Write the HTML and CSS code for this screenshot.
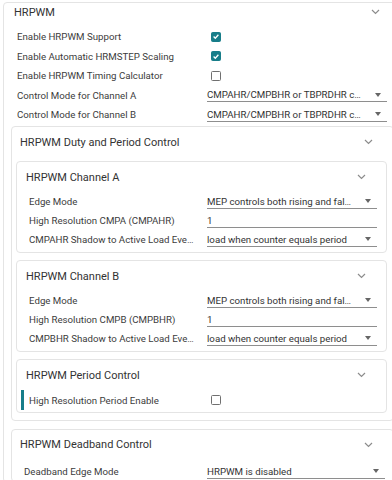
FILE: index.html
```html
<!DOCTYPE html>
<html lang="en">
<head>
    <meta charset="UTF-8">
    <meta name="viewport" content="width=device-width, initial-scale=1.0">
    <title>HRPWM</title>
    <link rel="stylesheet" href="styles.css">
</head>
<body>
    <div class="panel">
        <div class="panel-head">
            <span>HRPWM</span>
            <svg class="chevron" width="9" height="6" viewBox="0 0 9 6"><path d="M1 1 L4.5 4.5 L8 1"/></svg>
        </div>
        <div class="panel-body">
            <div class="row">
                <label>Enable HRPWM Support</label>
                <span class="check on"><svg width="9" height="9" viewBox="0 0 9 9"><path d="M1.8 4.6 L3.7 6.4 L7.2 2.6"/></svg></span>
            </div>
            <div class="row">
                <label>Enable Automatic HRMSTEP Scaling</label>
                <span class="check on"><svg width="9" height="9" viewBox="0 0 9 9"><path d="M1.8 4.6 L3.7 6.4 L7.2 2.6"/></svg></span>
            </div>
            <div class="row">
                <label>Enable HRPWM Timing Calculator</label>
                <span class="check"></span>
            </div>
            <div class="row">
                <label>Control Mode for Channel A</label>
                <div class="select"><span>CMPAHR/CMPBHR or TBPRDHR c…</span><i class="arrow"></i></div>
            </div>
            <div class="row">
                <label>Control Mode for Channel B</label>
                <div class="select"><span>CMPAHR/CMPBHR or TBPRDHR c…</span><i class="arrow"></i></div>
            </div>
        </div>

        <!-- Duty and period -->
        <div class="group">
            <div class="group-head">
                <span>HRPWM Duty and Period Control</span>
                <svg class="chevron" width="9" height="6" viewBox="0 0 9 6"><path d="M1 1 L4.5 4.5 L8 1"/></svg>
            </div>
            <div class="group-body">
                <div class="card">
                    <div class="card-head">
                        <span>HRPWM Channel A</span>
                        <svg class="chevron" width="9" height="6" viewBox="0 0 9 6"><path d="M1 1 L4.5 4.5 L8 1"/></svg>
                    </div>
                    <div class="card-body">
                        <div class="row">
                            <label>Edge Mode</label>
                            <div class="select"><span>MEP controls both rising and fal…</span><i class="arrow"></i></div>
                        </div>
                        <div class="row">
                            <label>High Resolution CMPA (CMPAHR)</label>
                            <div class="select"><span>1</span></div>
                        </div>
                        <div class="row">
                            <label>CMPAHR Shadow to Active Load Eve…</label>
                            <div class="select"><span>load when counter equals period</span><i class="arrow"></i></div>
                        </div>
                    </div>
                </div>

                <div class="card">
                    <div class="card-head">
                        <span>HRPWM Channel B</span>
                        <svg class="chevron" width="9" height="6" viewBox="0 0 9 6"><path d="M1 1 L4.5 4.5 L8 1"/></svg>
                    </div>
                    <div class="card-body">
                        <div class="row">
                            <label>Edge Mode</label>
                            <div class="select"><span>MEP controls both rising and fal…</span><i class="arrow"></i></div>
                        </div>
                        <div class="row">
                            <label>High Resolution CMPB (CMPBHR)</label>
                            <div class="select"><span>1</span></div>
                        </div>
                        <div class="row">
                            <label>CMPBHR Shadow to Active Load Eve…</label>
                            <div class="select"><span>load when counter equals period</span><i class="arrow"></i></div>
                        </div>
                    </div>
                </div>

                <div class="card last">
                    <div class="card-head">
                        <span>HRPWM Period Control</span>
                        <svg class="chevron" width="9" height="6" viewBox="0 0 9 6"><path d="M1 1 L4.5 4.5 L8 1"/></svg>
                    </div>
                    <div class="card-body period">
                        <div class="row marked">
                            <label>High Resolution Period Enable</label>
                            <span class="check"></span>
                        </div>
                    </div>
                </div>
            </div>
        </div>

        <!-- Deadband -->
        <div class="group deadband">
            <div class="group-head">
                <span>HRPWM Deadband Control</span>
                <svg class="chevron" width="9" height="6" viewBox="0 0 9 6"><path d="M1 1 L4.5 4.5 L8 1"/></svg>
            </div>
            <div class="group-body">
                <div class="row">
                    <label>Deadband Edge Mode</label>
                    <div class="select"><span>HRPWM is disabled</span><i class="arrow"></i></div>
                </div>
            </div>
        </div>
    </div>
</body>
</html>
```

FILE: styles.css
```css
body {
    font-family: Roboto, "Liberation Sans", sans-serif;
    color: #333;
    background: #fff;
    margin: 0;
    width: 392px;
    height: 480px;
    overflow: hidden;
}

.panel {
    margin: 2px 0 0 3px;
    width: 396px;
    border: 1px solid #e4e4e4;
    border-radius: 4px;
    box-sizing: border-box;
}

.panel-head,
.group-head,
.card-head {
    display: flex;
    justify-content: space-between;
    align-items: center;
    font-size: 11px;
    color: #333;
}

.panel-head {
    height: 18px;
    padding: 0 18px 0 10px;
}

.chevron path {
    fill: none;
    stroke: #8c8c8c;
    stroke-width: 1.2;
}

.panel-body {
    padding: 6px 0 0 13px;
}

.row {
    display: grid;
    grid-template-columns: 190px 180px;
    align-items: center;
    height: 19.5px;
    font-size: 9.7px;
    color: #3c3c3c;
}

label {
    white-space: nowrap;
    overflow: hidden;
}

.check {
    width: 10px;
    height: 10px;
    margin-left: 4px;
    border: 1.5px solid #707070;
    border-radius: 1.5px;
    box-sizing: border-box;
    display: flex;
    align-items: center;
    justify-content: center;
}

.check.on {
    background: #177d89;
    border-color: #177d89;
}

.check svg path {
    fill: none;
    stroke: #fff;
    stroke-width: 1.5;
}

.select {
    display: flex;
    justify-content: space-between;
    align-items: center;
    height: 13px;
    border-bottom: 1px solid #8e8e8e;
    padding-right: 6px;
    color: #333;
    white-space: nowrap;
}

.arrow {
    width: 0;
    height: 0;
    border-left: 3.5px solid transparent;
    border-right: 3.5px solid transparent;
    border-top: 4px solid #666;
}

/* groups inside the panel */
.group {
    margin: 1.5px 0 0 7px;
    width: 383px;
    border: 1px solid #e4e4e4;
    border-radius: 4px;
    box-sizing: border-box;
}

.group-head {
    height: 30px;
    padding: 0 20px 0 8px;
}

.group-body {
    padding: 4px 6px 7px 4px;
}

.card {
    border: 1px solid #e4e4e4;
    border-radius: 4px;
    margin-bottom: 7px;
}

.card.last {
    margin-bottom: 0;
}

.card-head {
    height: 30px;
    padding: 0 20px 0 9px;
}

.card-body {
    padding: 0 10px 3px 12px;
}

.card-body .row {
    grid-template-columns: 178px 170px;
    height: 19px;
}

.card-body.period {
    padding: 0 10px 2px 4px;
}

.card-body .row.marked {
    height: 20px;
    border-left: 3px solid #177d89;
    padding-left: 5px;
}

.deadband {
    margin-top: 8px;
}

.deadband .group-head {
    height: 29px;
}

.deadband .group-body {
    padding: 3px 7px 0 12px;
}

.deadband .row {
    grid-template-columns: 183px 178px;
    height: 19px;
}
```
